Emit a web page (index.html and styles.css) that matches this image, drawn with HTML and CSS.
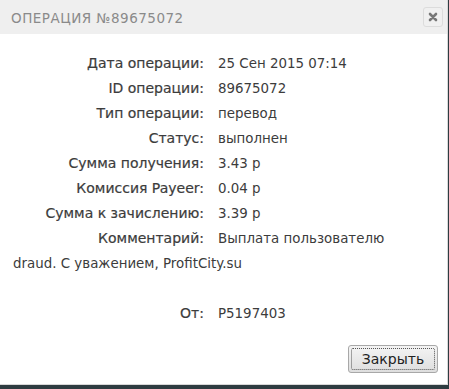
FILE: index.html
```html
<!DOCTYPE html>
<html lang="ru">
<head>
<meta charset="utf-8">
<link rel="stylesheet" href="styles.css">
</head>
<body>
<div class="dialog">
  <div class="header">
    <span class="title">ОПЕРАЦИЯ №89675072</span>
    <button class="close" aria-label="Закрыть">
      <svg width="10" height="10" viewBox="0 0 10 10"><path d="M2 2 L8 8 M8 2 L2 8" stroke="#777" stroke-width="2.6" stroke-linecap="round"/></svg>
    </button>
  </div>
  <div class="content">
    <div class="row"><span class="label">Дата операции:</span>25 Сен 2015 07:14</div>
    <div class="row"><span class="label">ID операции:</span>89675072</div>
    <div class="row"><span class="label">Тип операции:</span>перевод</div>
    <div class="row"><span class="label">Статус:</span>выполнен</div>
    <div class="row"><span class="label">Сумма получения:</span>3.43 р</div>
    <div class="row"><span class="label">Комиссия Payeer:</span>0.04 р</div>
    <div class="row"><span class="label">Сумма к зачислению:</span>3.39 р</div>
    <div class="row"><span class="label">Комментарий:</span>Выплата пользователю draud. С уважением, ProfitCity.su</div>
    <div class="row from"><span class="label">От:</span>P5197403</div>
  </div>
  <div class="footer">
    <button class="btn"><span class="btn-inner">Закрыть</span></button>
  </div>
</div>
</body>
</html>
```
FILE: styles.css
```css
html, body {
  margin: 0;
  padding: 0;
}
body {
  background: #2e3c41;
  width: 449px;
  height: 389px;
  overflow: hidden;
}
.dialog {
  width: 447px;
  height: 384px;
  background: #fff;
  border-bottom: 1px solid #d8d8d8;
  border-right: 1px solid #d8d8d8;
  display: flex;
  flex-direction: column;
}
.header {
  height: 34px;
  background: #efefef;
  display: flex;
  align-items: center;
  justify-content: space-between;
  padding: 0 4px 0 11px;
}
.title {
  font-family: "DejaVu Sans", sans-serif;
  font-size: 13.5px;
  letter-spacing: 0.5px;
  color: #8a8a8a;
  padding-top: 1px;
}
.close {
  width: 20px;
  height: 20px;
  padding: 0;
  border: 1px solid #dcdcdc;
  border-radius: 3px;
  background: #f0f0f0;
  display: flex;
  align-items: center;
  justify-content: center;
}
.content {
  padding: 17px 40px 0 13px;
  font-family: "DejaVu Sans", sans-serif;
  font-size: 13.4px;
  line-height: 25px;
  color: #3c3c3c;
}
.label {
  display: inline-block;
  width: 191px;
  text-align: right;
  margin-right: 14px;
  font-size: 14px;
  -webkit-text-stroke: 0.2px #3c3c3c;
}
.from {
  margin-top: 25px;
}
.footer {
  margin-top: auto;
  display: flex;
  justify-content: flex-end;
  padding: 0 9px 11px 0;
}
.btn {
  width: 90px;
  height: 28px;
  padding: 2px;
  border: 1px solid #a8a8a8;
  border-radius: 3px;
  background: linear-gradient(#f4f4f4, #dedede);
  font-family: "DejaVu Sans", sans-serif;
  font-size: 14px;
  color: #222;
}
.btn-inner {
  display: flex;
  align-items: center;
  justify-content: center;
  height: 100%;
  border: 1px dotted #555;
  border-radius: 2px;
  box-sizing: border-box;
}
```
